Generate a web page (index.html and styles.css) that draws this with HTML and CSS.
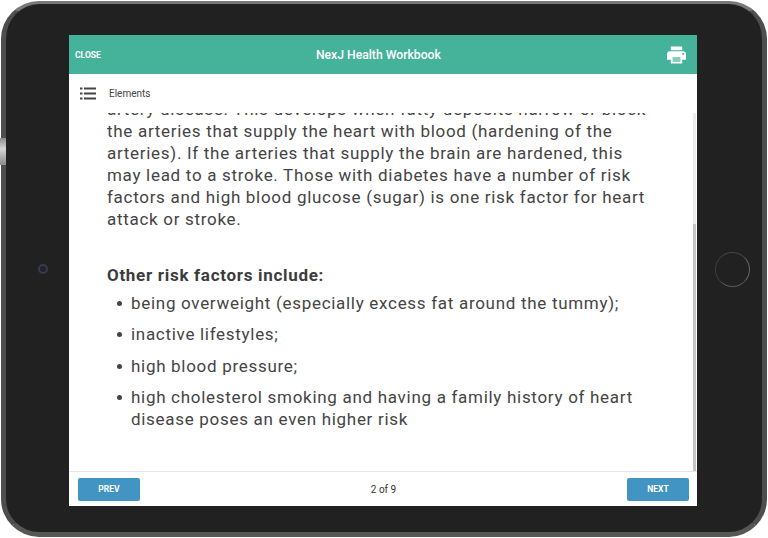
FILE: index.html
```html
<!DOCTYPE html>
<html>
  <head>
    <title>NexJ Health Workbook</title>
    <link rel="stylesheet" href="styles.css">
  </head>
  <body>
    <div class="tablet">
      <div class="side-button"></div>
      <div class="camera"></div>
      <div class="home-button"></div>

      <div class="screen">
        <header class="title-bar">
          <a class="close-link">CLOSE</a>
          <h1>NexJ Health Workbook</h1>
          <svg class="print-icon" viewBox="2 3 20 18" width="19" height="18">
            <path fill="#fff" d="M19 8H5c-1.66 0-3 1.34-3 3v6h4v4h12v-4h4v-6c0-1.66-1.34-3-3-3zm-3 11H8v-5h8v5zm3-7c-.55 0-1-.45-1-1s.45-1 1-1 1 .45 1 1-.45 1-1 1zm-1-9H6v4h12V3z"/>
            <rect x="8" y="14" width="8" height="5" fill="#fff" opacity="0.35"/>
          </svg>
        </header>

        <div class="elements-bar">
          <svg class="list-icon" viewBox="0 0 16 13" width="16" height="13">
            <rect x="0" y="0.5" width="2.5" height="2"/>
            <rect x="4" y="0.5" width="12" height="2"/>
            <rect x="0" y="5.5" width="2.5" height="2"/>
            <rect x="4" y="5.5" width="12" height="2"/>
            <rect x="0" y="10.5" width="2.5" height="2"/>
            <rect x="4" y="10.5" width="12" height="2"/>
          </svg>
          <span>Elements</span>
        </div>

        <div class="content">
          <div class="content-inner">
            <p>artery disease. This develops when fatty deposits narrow or block the arteries that supply the heart with blood (hardening of the arteries). If the arteries that supply the brain are hardened, this may lead to a stroke. Those with diabetes have a number of risk factors and high blood glucose (sugar) is one risk factor for heart attack or stroke.</p>
            <h2>Other risk factors include:</h2>
            <ul>
              <li>being overweight (especially excess fat around the tummy);</li>
              <li>inactive lifestyles;</li>
              <li>high blood pressure;</li>
              <li>high cholesterol smoking and having a family history of heart disease poses an even higher risk</li>
            </ul>
          </div>
          <div class="scrollbar"></div>
        </div>

        <footer class="pager">
          <button>PREV</button>
          <span>2 of 9</span>
          <button>NEXT</button>
        </footer>
      </div>
    </div>
  </body>
</html>
```

FILE: styles.css
```css
html, body {
  margin: 0;
  padding: 0;
  height: 538px;
  overflow: hidden;
  background: #fff;
}
body {
  font-family: Roboto, "Liberation Sans", sans-serif;
  color: #333;
}

.tablet {
  position: relative;
  box-sizing: border-box;
  width: 766px;
  height: 536px;
  margin: 1px;
  padding: 31px 65px 26px 63px;
  background: #212121;
  border-style: solid;
  border-width: 3px 5px 5px 5px;
  border-color: #777976 #4d4f4d #565856 #4d4f4d;
  border-radius: 38px;
}
.side-button {
  position: absolute;
  left: -6px;
  top: 134px;
  width: 6px;
  height: 27px;
  background: linear-gradient(#8a8c8a, #d4d6d4 40%, #8a8c8a);
}
.camera {
  position: absolute;
  left: 32px;
  top: 260px;
  width: 6px;
  height: 6px;
  background: #22222c;
  border: 2px solid #3a3a48;
  border-radius: 50%;
}
.home-button {
  position: absolute;
  left: 709px;
  top: 248px;
  box-sizing: border-box;
  width: 35px;
  height: 35px;
  border: 1px solid;
  border-color: #444 #666 #5a5a5a #3c3c3c;
  border-radius: 50%;
}

.screen {
  display: flex;
  flex-direction: column;
  height: 471px;
  background: #fff;
}

.title-bar {
  display: flex;
  align-items: center;
  justify-content: space-between;
  flex: 0 0 39px;
  padding: 0 11px 0 6px;
  background: #45b29a;
  color: #fff;
}
.title-bar h1 {
  flex: 1;
  margin: 0 11px 0 0;
  font-size: 12.2px;
  font-weight: 500;
  text-align: center;
}
.close-link {
  font-size: 8.5px;
  font-weight: 700;
}
.print-icon {
  display: block;
}

.elements-bar {
  display: flex;
  align-items: center;
  gap: 13px;
  flex: 0 0 39px;
  padding-left: 11px;
  font-size: 10px;
  color: #444;
}
.list-icon {
  fill: #444;
}

.content {
  position: relative;
  flex: 1;
  overflow: hidden;
}
.content-inner {
  margin-top: -15px;
  padding: 0 50px 0 38px;
  font-size: 17px;
  line-height: 22px;
  letter-spacing: 0.7px;
  color: #444;
}
.content-inner p {
  margin: 0 0 34px;
}
.content-inner h2 {
  margin: 0 0 6px;
  font-size: 17px;
  font-weight: 700;
  line-height: 22px;
  color: #3c3c3c;
}
.content-inner ul {
  margin: 0;
  padding: 0 0 0 24px;
  list-style: none;
}
.content-inner li {
  position: relative;
  margin-bottom: 9.3px;
}
.content-inner li::before {
  content: "";
  position: absolute;
  left: -14px;
  top: 9px;
  width: 5px;
  height: 5px;
  background: #444;
  border-radius: 50%;
}
.scrollbar {
  position: absolute;
  top: 0;
  right: 1px;
  bottom: 0;
  width: 3px;
  background: linear-gradient(#ececec 0, #ececec 31%, #c4c4c4 31%, #c4c4c4 100%);
}

.pager {
  display: flex;
  align-items: center;
  justify-content: space-between;
  flex: 0 0 34px;
  padding: 0 8px 0 9px;
  border-top: 1px solid #e6e6e6;
  font-size: 10px;
  color: #333;
}
.pager button {
  width: 62px;
  height: 23px;
  padding: 0;
  background: #4294c3;
  border: none;
  border-radius: 2px;
  color: #fff;
  font-family: inherit;
  font-size: 8.5px;
  font-weight: 700;
}
```
